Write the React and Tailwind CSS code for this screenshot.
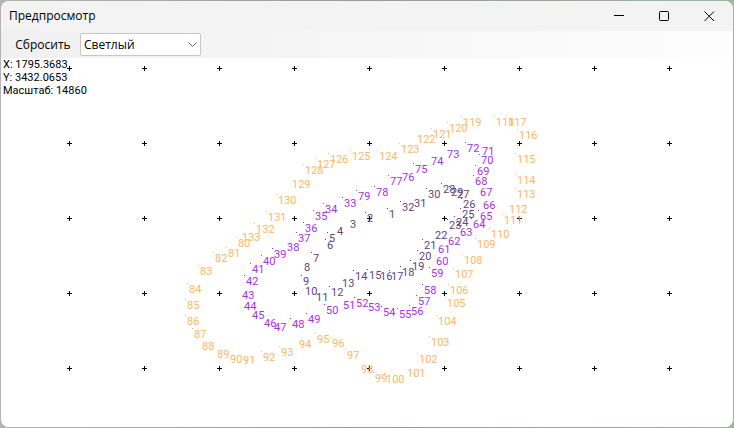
import React, { useState } from 'react';

const GROUPS = [
    {
        name: 'inner',
        color: '#5f4678',
        points: [
            [1, 387, 208], [2, 365, 212], [3, 348, 218, true], [4, 335, 225, true], [5, 327, 232],
            [6, 325, 239], [7, 311, 252], [8, 302, 261, true], [9, 301, 275], [10, 303, 285, true],
            [11, 314, 291, true], [12, 329, 286], [13, 340, 277, true], [14, 353, 270], [15, 367, 269],
            [16, 378, 270, true], [17, 389, 270], [18, 400, 266], [19, 410, 260], [20, 417, 250],
            [21, 422, 239], [22, 433, 229, true], [23, 447, 219], [24, 454, 216], [25, 460, 208],
            [26, 461, 198], [27, 455, 188], [28, 441, 183], [29, 449, 186], [30, 426, 188],
            [31, 412, 197, true], [32, 400, 201],
        ],
    },
    {
        name: 'middle',
        color: '#a832d8',
        points: [
            [33, 342, 197], [34, 323, 203], [35, 313, 210], [36, 303, 222], [37, 296, 232],
            [38, 285, 241, true], [39, 272, 248], [40, 261, 255], [41, 250, 263], [42, 244, 275],
            [43, 240, 289, true], [44, 242, 300, true], [45, 250, 309, true], [46, 262, 317, true],
            [47, 272, 321, true], [48, 290, 318], [49, 306, 313], [50, 324, 304], [51, 341, 299, true],
            [52, 354, 297], [53, 366, 301, true], [54, 381, 306], [55, 397, 308], [56, 409, 305],
            [57, 416, 295], [58, 422, 284], [59, 429, 267], [60, 434, 255, true], [61, 436, 243, true],
            [62, 446, 235, true], [63, 458, 226, true], [64, 471, 218], [65, 478, 210],
            [66, 481, 199, true], [67, 478, 186, true], [68, 473, 175], [69, 475, 165], [70, 479, 154],
            [71, 480, 145, true], [72, 465, 142], [73, 445, 148, true], [74, 429, 155, true],
            [75, 413, 163], [76, 400, 171, true], [77, 388, 175], [78, 374, 186], [79, 356, 190],
        ],
    },
    {
        name: 'outer',
        color: '#fab765',
        points: [
            [80, 236, 237], [81, 226, 247], [82, 213, 252], [83, 198, 265], [84, 187, 283],
            [85, 185, 299], [86, 185, 315], [87, 192, 328], [88, 200, 340, true], [89, 215, 348, true],
            [90, 228, 353, true], [91, 241, 354, true], [92, 261, 351], [93, 279, 346],
            [94, 297, 338, true], [95, 315, 333], [96, 330, 337], [97, 345, 349], [98, 359, 363, true],
            [99, 373, 372], [100, 384, 373], [101, 405, 367, true], [102, 417, 353], [103, 429, 336],
            [104, 436, 315], [105, 445, 297], [106, 448, 284], [107, 453, 268], [108, 462, 254],
            [109, 475, 238], [110, 489, 228], [111, 502, 214], [112, 507, 203, true], [113, 515, 188],
            [114, 515, 174], [115, 515, 153], [116, 517, 129], [117, 506, 116], [118, 494, 116],
            [119, 461, 116], [120, 447, 122], [121, 431, 128], [122, 415, 133, true], [123, 399, 143],
            [124, 377, 150], [125, 350, 150], [126, 328, 153], [127, 315, 158], [128, 303, 164],
            [129, 290, 178, true], [130, 276, 194], [131, 266, 211], [132, 254, 223],
            [133, 240, 231, true],
        ],
    },
];

const GRID_X = [69, 144, 219, 294, 369, 444, 519, 594, 669];
const GRID_Y = [68, 143, 218, 293, 368];

function TitleBar() {
    return (
        <header className="flex h-[30px] shrink-0 items-center justify-between bg-[#f3f3f3] pr-px pl-2">
            <h1 className="text-[12px] leading-4">Предпросмотр</h1>
            <div className="flex h-full">
                <button type="button" aria-label="Свернуть" className="flex w-[46px] items-center justify-center">
                    <svg width="11" height="11" shapeRendering="crispEdges">
                        <path d="M0 4.5H10" stroke="#000" />
                    </svg>
                </button>
                <button type="button" aria-label="Развернуть" className="flex w-[44px] items-center justify-center">
                    <svg width="11" height="11">
                        <rect x="0.5" y="0.5" width="9" height="9" rx="1" fill="none" stroke="#000" />
                    </svg>
                </button>
                <button type="button" aria-label="Закрыть" className="flex w-[46px] items-center justify-center">
                    <svg width="11" height="11">
                        <path d="M0.5 0.5L10 10M10 0.5L0.5 10" stroke="#000" />
                    </svg>
                </button>
            </div>
        </header>
    );
}

function Toolbar({ theme, onTheme, onReset }) {
    return (
        <div className="flex h-[27px] shrink-0 items-center bg-linear-to-r from-[#f0f0f0] to-[#fdfdfd] pl-3">
            <button type="button" onClick={onReset} className="w-[60px] text-center text-[12px] leading-4">
                Сбросить
            </button>
            <div className="relative ml-[7px]">
                <select
                    aria-label="Тема"
                    value={theme}
                    onChange={(e) => onTheme(e.target.value)}
                    className="block h-[23px] w-[121px] appearance-none rounded-xs border border-[#c8c8c8] bg-white pl-[3px] text-[12px] leading-4"
                >
                    <option value="light">Светлый</option>
                    <option value="dark">Тёмный</option>
                </select>
                <svg className="pointer-events-none absolute top-[9px] right-1" width="9" height="6">
                    <path d="M0.5 0.5L4.5 4.5L8.5 0.5" fill="none" stroke="#606060" />
                </svg>
            </div>
        </div>
    );
}

function PointMap() {
    return (
        <svg className="block h-full w-full font-[Roboto,'Liberation_Sans',sans-serif] text-[11px]">
            {/* points are stored in window coordinates */}
            <g transform="translate(-1 -58)">
                <g shapeRendering="crispEdges" fill="#000">
                    {GRID_Y.map((y) =>
                        GRID_X.map((x) => (
                            <path key={`${x}-${y}`} d={`M${x - 2} ${y}h5v1h-5zM${x} ${y - 2}h1v5h-1z`} />
                        ))
                    )}
                </g>
                {GROUPS.map((group) => (
                    <g key={group.name} fill={group.color}>
                        {group.points.map(([id, x, y, hideDot]) => (
                            <g key={id}>
                                {!hideDot && <rect x={x} y={y} width="1" height="1" />}
                                <text x={x + 2} y={y + 10}>{id}</text>
                            </g>
                        ))}
                    </g>
                ))}
            </g>
        </svg>
    );
}

export default function App() {
    const [theme, setTheme] = useState('light');

    return (
        <div className="h-screen bg-linear-to-r from-[#b4b4b4] via-[#989898] to-[#9cb89f] p-px font-['Open_Sans','Noto_Sans',sans-serif] text-black">
            <div className="flex h-full flex-col overflow-hidden rounded-lg bg-white">
                <TitleBar />
                <Toolbar theme={theme} onTheme={setTheme} onReset={() => setTheme('light')} />
                <main className="relative min-h-0 flex-1 bg-white">
                    <PointMap />
                    <div className="absolute top-0 left-[2px] font-[Roboto,'Liberation_Sans',sans-serif] text-[11px] leading-[13px]">
                        <p>X: 1795.3683</p>
                        <p>Y: 3432.0653</p>
                        <p>Масштаб: 14860</p>
                    </div>
                </main>
            </div>
        </div>
    );
}
